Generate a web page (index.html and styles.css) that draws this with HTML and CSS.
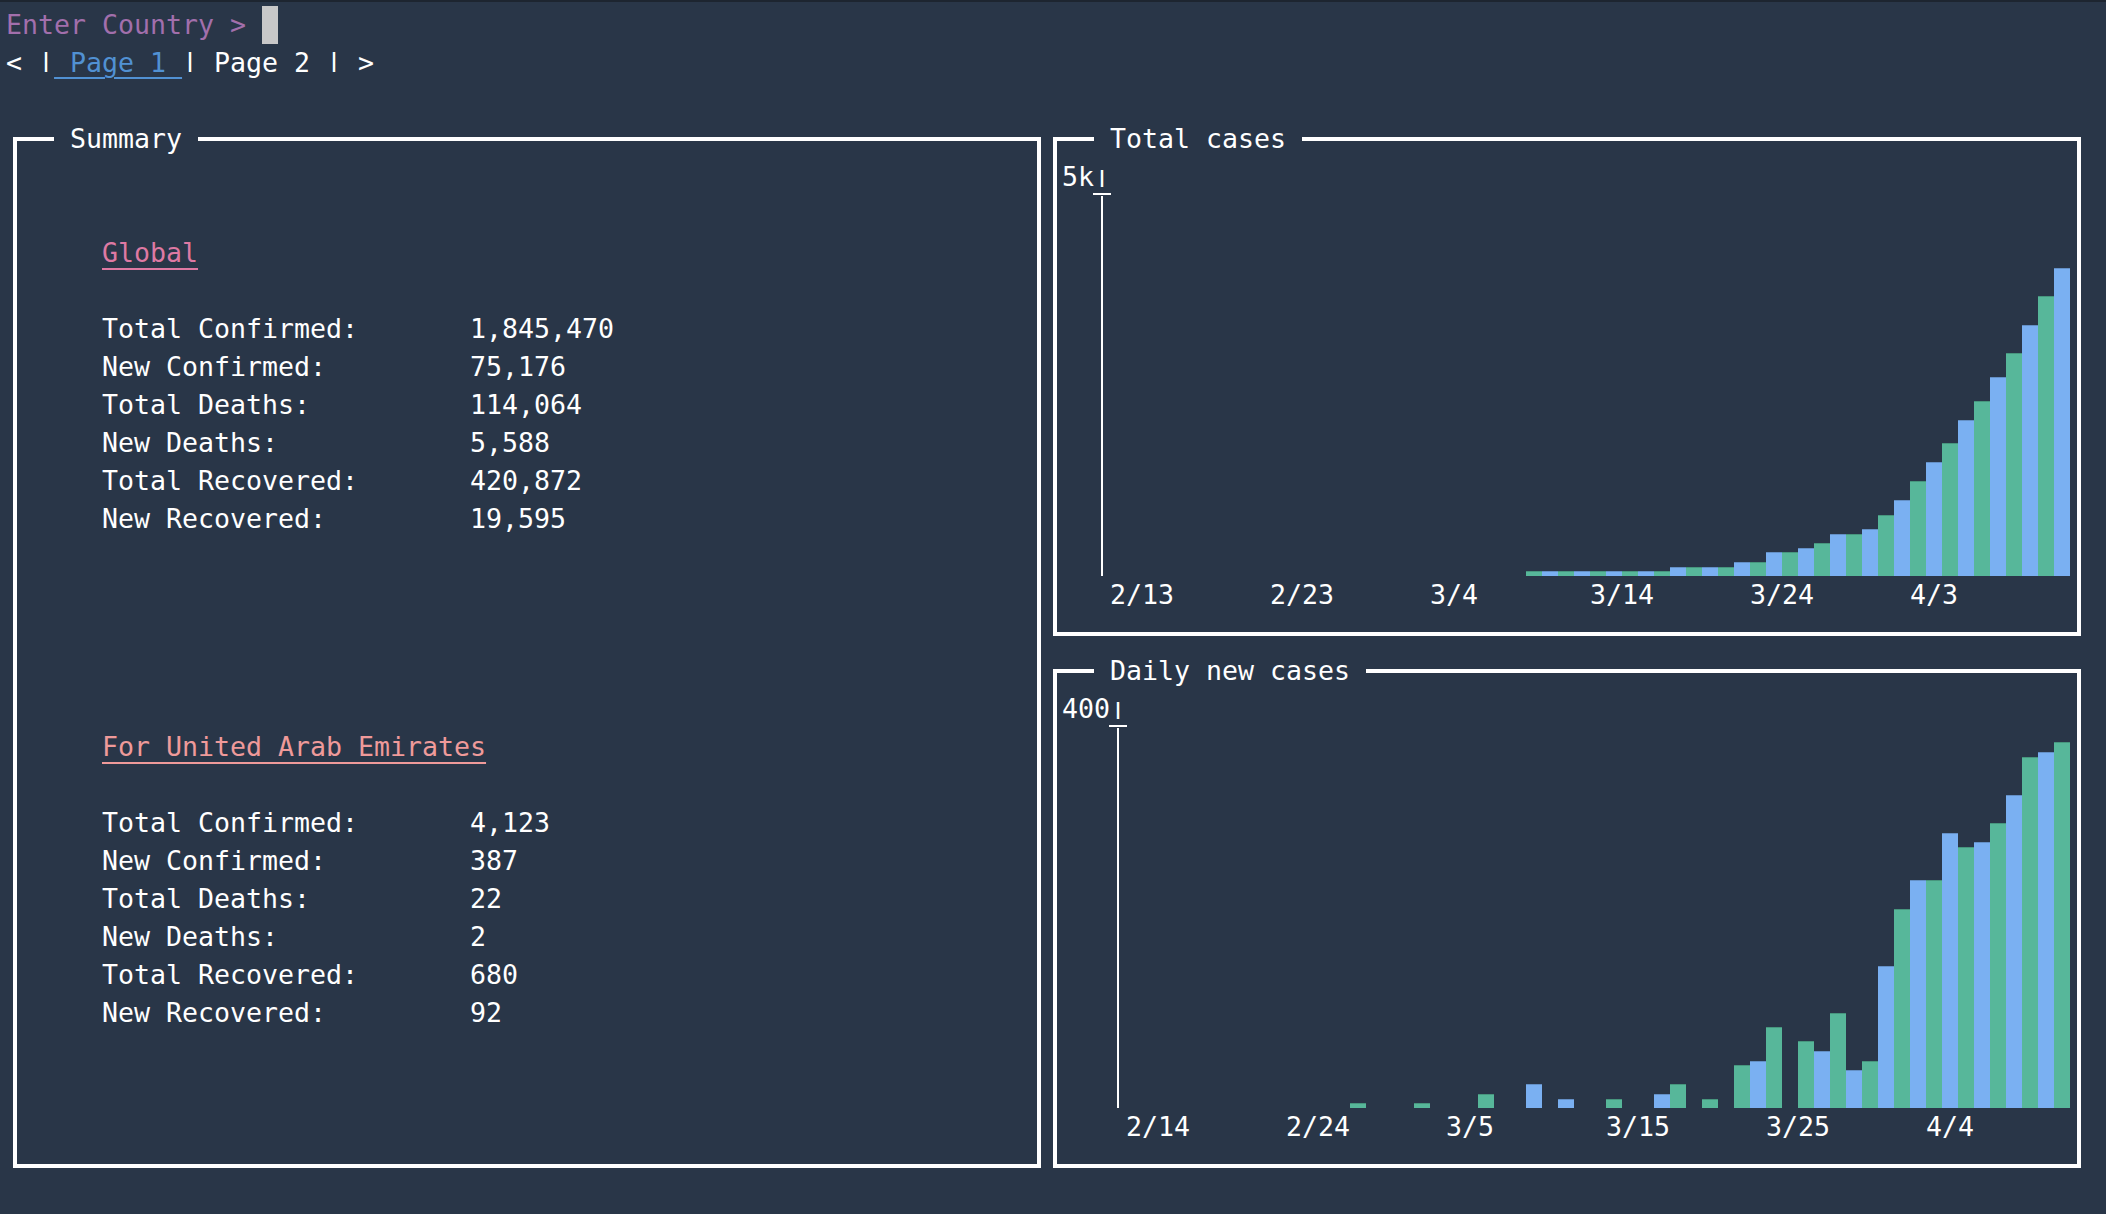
FILE: index.html
```html
<!DOCTYPE html>
<html lang="en">
<head>
<meta charset="utf-8">
<title>COVID-19 Tracker</title>
<link rel="stylesheet" href="styles.css">
</head>
<body>
<div class="topbar"></div>
<main class="screen">
  <div class="line"><span class="prompt">Enter Country &gt; </span><span class="cursor"></span></div>
  <div class="line">&lt; <span class="sep">|</span><span class="tab active"> Page 1 </span><span class="sep">|</span><span class="tab"> Page 2 </span><span class="sep">|</span> &gt;</div>
  <div class="line"></div>
  <div class="panels">
    <div class="panel summary-panel">
      <fieldset class="box">
        <legend>Summary</legend>
        <div class="summary">
          <section class="group">
            <h2 class="group-title global">Global</h2>
            <dl class="stats">
              <dt>Total Confirmed:</dt><dd>1,845,470</dd>
              <dt>New Confirmed:</dt><dd>75,176</dd>
              <dt>Total Deaths:</dt><dd>114,064</dd>
              <dt>New Deaths:</dt><dd>5,588</dd>
              <dt>Total Recovered:</dt><dd>420,872</dd>
              <dt>New Recovered:</dt><dd>19,595</dd>
            </dl>
          </section>
          <section class="group">
            <h2 class="group-title country">For United Arab Emirates</h2>
            <dl class="stats">
              <dt>Total Confirmed:</dt><dd>4,123</dd>
              <dt>New Confirmed:</dt><dd>387</dd>
              <dt>Total Deaths:</dt><dd>22</dd>
              <dt>New Deaths:</dt><dd>2</dd>
              <dt>Total Recovered:</dt><dd>680</dd>
              <dt>New Recovered:</dt><dd>92</dd>
            </dl>
          </section>
        </div>
      </fieldset>
    </div>

    <div class="panel">
      <fieldset class="box">
        <legend>Total cases</legend>
        <div class="chart total">
          <div class="ylabel">5k<span class="tick"><span class="tick-glyph">|</span></span></div>
          <div class="yaxis"></div>
          <div class="bars">
            <div class="bar g" style="height:5px"></div>
            <div class="bar b" style="height:5px"></div>
            <div class="bar g" style="height:5px"></div>
            <div class="bar b" style="height:5px"></div>
            <div class="bar g" style="height:5px"></div>
            <div class="bar b" style="height:5px"></div>
            <div class="bar g" style="height:5px"></div>
            <div class="bar b" style="height:5px"></div>
            <div class="bar g" style="height:5px"></div>
            <div class="bar b" style="height:9px"></div>
            <div class="bar g" style="height:9px"></div>
            <div class="bar b" style="height:9px"></div>
            <div class="bar g" style="height:9px"></div>
            <div class="bar b" style="height:14px"></div>
            <div class="bar g" style="height:14px"></div>
            <div class="bar b" style="height:24px"></div>
            <div class="bar g" style="height:24px"></div>
            <div class="bar b" style="height:28px"></div>
            <div class="bar g" style="height:33px"></div>
            <div class="bar b" style="height:42px"></div>
            <div class="bar g" style="height:42px"></div>
            <div class="bar b" style="height:47px"></div>
            <div class="bar g" style="height:61px"></div>
            <div class="bar b" style="height:76px"></div>
            <div class="bar g" style="height:95px"></div>
            <div class="bar b" style="height:114px"></div>
            <div class="bar g" style="height:133px"></div>
            <div class="bar b" style="height:156px"></div>
            <div class="bar g" style="height:175px"></div>
            <div class="bar b" style="height:199px"></div>
            <div class="bar g" style="height:223px"></div>
            <div class="bar b" style="height:251px"></div>
            <div class="bar g" style="height:280px"></div>
            <div class="bar b" style="height:308px"></div>
          </div>
          <div class="xlabels"><span>2/13</span><span>2/23</span><span>3/4</span><span>3/14</span><span>3/24</span><span>4/3</span></div>
        </div>
      </fieldset>
    </div>

    <div class="panel">
      <fieldset class="box">
        <legend>Daily new cases</legend>
        <div class="chart daily">
          <div class="ylabel">400<span class="tick"><span class="tick-glyph">|</span></span></div>
          <div class="yaxis"></div>
          <div class="bars">
            <div class="bar g" style="height:5px"></div>
            <div class="bar"></div>
            <div class="bar"></div>
            <div class="bar"></div>
            <div class="bar g" style="height:5px"></div>
            <div class="bar"></div>
            <div class="bar"></div>
            <div class="bar"></div>
            <div class="bar g" style="height:14px"></div>
            <div class="bar"></div>
            <div class="bar"></div>
            <div class="bar b" style="height:24px"></div>
            <div class="bar"></div>
            <div class="bar b" style="height:9px"></div>
            <div class="bar"></div>
            <div class="bar"></div>
            <div class="bar g" style="height:9px"></div>
            <div class="bar"></div>
            <div class="bar"></div>
            <div class="bar b" style="height:14px"></div>
            <div class="bar g" style="height:24px"></div>
            <div class="bar"></div>
            <div class="bar g" style="height:9px"></div>
            <div class="bar"></div>
            <div class="bar g" style="height:43px"></div>
            <div class="bar b" style="height:47px"></div>
            <div class="bar g" style="height:81px"></div>
            <div class="bar"></div>
            <div class="bar g" style="height:67px"></div>
            <div class="bar b" style="height:57px"></div>
            <div class="bar g" style="height:95px"></div>
            <div class="bar b" style="height:38px"></div>
            <div class="bar g" style="height:47px"></div>
            <div class="bar b" style="height:142px"></div>
            <div class="bar g" style="height:199px"></div>
            <div class="bar b" style="height:228px"></div>
            <div class="bar g" style="height:228px"></div>
            <div class="bar b" style="height:275px"></div>
            <div class="bar g" style="height:261px"></div>
            <div class="bar b" style="height:266px"></div>
            <div class="bar g" style="height:285px"></div>
            <div class="bar b" style="height:313px"></div>
            <div class="bar g" style="height:351px"></div>
            <div class="bar b" style="height:356px"></div>
            <div class="bar g" style="height:366px"></div>
          </div>
          <div class="xlabels"><span>2/14</span><span>2/24</span><span>3/5</span><span>3/15</span><span>3/25</span><span>4/4</span></div>
        </div>
      </fieldset>
    </div>
  </div>
</main>
</body>
</html>
```

FILE: styles.css
```css
* {
  box-sizing: border-box;
}

html,
body {
  margin: 0;
  background: #293648;
}

body {
  width: 2106px;
  height: 1214px;
  overflow: hidden;
  font-family: "DejaVu Sans Mono", "Liberation Mono", monospace;
  font-size: 26.58px;
  line-height: 38px;
  color: #ffffff;
}

.topbar {
  height: 2px;
  background: #1d2530;
}

.screen {
  padding: 4px 0 0 6px;
}

.line {
  height: 38px;
  white-space: pre;
}

.prompt {
  color: #a26fac;
}

.cursor {
  display: inline-block;
  width: 16px;
  height: 38px;
  background: #c8c8c8;
  vertical-align: top;
}

.sep {
  display: inline-block;
  vertical-align: top;
  height: 38px;
  clip-path: inset(4px 0 10px 0);
}

.tab.active {
  color: #5191d3;
  text-decoration: underline;
  text-decoration-thickness: 2px;
  text-underline-offset: 5px;
}

.panels {
  display: grid;
  grid-template-columns: 1040px 1040px;
  grid-template-rows: 532px 532px;
}

.panel {
  display: flex;
  flex-direction: column;
  padding: 0 5px 16px 7px;
}

.summary-panel {
  grid-row: 1 / span 2;
}

.box {
  flex: 1;
  margin: 0;
  padding: 0;
  min-width: 0;
  min-height: 0;
  border: 4px solid #ffffff;
}

.box legend {
  margin-left: 37px;
  padding: 0 16px;
  line-height: 38px;
  white-space: pre;
}

/* Summary */
.summary {
  padding: 76px 0 0 85px;
}

.group + .group {
  margin-top: 190px;
}

.group-title {
  margin: 0 0 38px;
  height: 38px;
  font: inherit;
  text-decoration: underline;
  text-decoration-thickness: 2px;
  text-underline-offset: 6px;
}

.global {
  color: #de79a3;
}

.country {
  color: #ef9a9a;
}

.stats {
  display: grid;
  grid-template-columns: 368px auto;
  margin: 0;
}

.stats dt,
.stats dd {
  margin: 0;
  height: 38px;
  white-space: pre;
}

/* Charts */
.chart {
  display: grid;
  grid-template-columns: 48px 960px;
  grid-template-rows: 38px 380px 38px;
  margin-left: 5px;
}

.chart.daily {
  grid-template-columns: 64px 944px;
}

.ylabel {
  grid-column: 1 / span 2;
  white-space: pre;
}

.tick {
  display: inline-block;
  vertical-align: top;
  width: 18px;
  height: 37px;
  margin-left: -1px;
  border-bottom: 2px solid #ffffff;
}

.tick-glyph {
  display: block;
  height: 35px;
  padding-left: 1px;
  line-height: 38px;
  clip-path: inset(12px 0 6px 0);
}

.yaxis {
  display: flex;
  justify-content: flex-end;
  padding-right: 7px;
}

.yaxis::before {
  content: "";
  width: 2px;
  background: #ffffff;
}

.bars {
  display: flex;
  align-items: flex-end;
  justify-content: flex-end;
}

.bar {
  flex: none;
  width: 16px;
}

.bar.g {
  background: #57b79a;
  box-shadow: inset 0 1px 0 rgba(0, 0, 0, 0.18);
}

.bar.b {
  background: #7ab0f2;
  box-shadow: inset 0 1px 0 rgba(0, 0, 0, 0.18);
}

.xlabels {
  grid-column: 2;
  display: flex;
  white-space: pre;
}

.xlabels span {
  flex: none;
  width: 160px;
}
```
